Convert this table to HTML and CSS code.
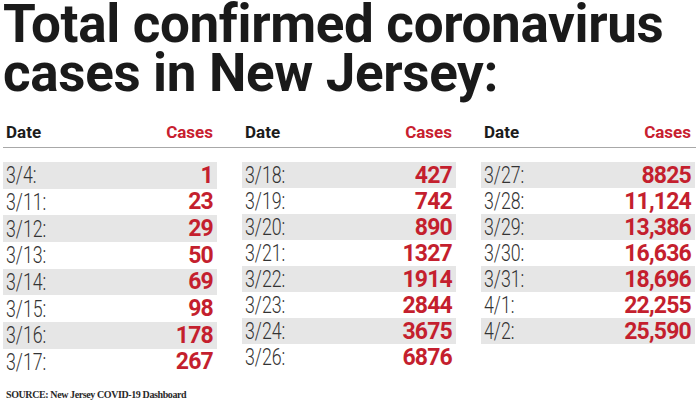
FILE: index.html
```html
<!DOCTYPE html>
<html lang="en">
  <head>
    <meta charset="UTF-8" />
    <meta name="viewport" content="width=device-width, initial-scale=1.0" />
    <title>NJ Coronavirus Cases</title>
    <link rel="stylesheet" href="styles.css">
  </head>
  <body>
    <div class="container">
      <h1>Total confirmed coronavirus<br />cases in New Jersey:</h1>

      <div class="table-head">
        <div class="head"><span>Date</span><span class="cases">Cases</span></div>
        <div class="head"><span>Date</span><span class="cases">Cases</span></div>
        <div class="head"><span>Date</span><span class="cases">Cases</span></div>
      </div>

      <div class="table-body">
        <div class="col col-first">
          <div class="row"><span class="date">3/4:</span><span class="num">1</span></div>
          <div class="row"><span class="date">3/11:</span><span class="num">23</span></div>
          <div class="row"><span class="date">3/12:</span><span class="num">29</span></div>
          <div class="row"><span class="date">3/13:</span><span class="num">50</span></div>
          <div class="row"><span class="date">3/14:</span><span class="num">69</span></div>
          <div class="row"><span class="date">3/15:</span><span class="num">98</span></div>
          <div class="row"><span class="date">3/16:</span><span class="num">178</span></div>
          <div class="row"><span class="date">3/17:</span><span class="num">267</span></div>
        </div>
        <div class="col">
          <div class="row"><span class="date">3/18:</span><span class="num">427</span></div>
          <div class="row"><span class="date">3/19:</span><span class="num">742</span></div>
          <div class="row"><span class="date">3/20:</span><span class="num">890</span></div>
          <div class="row"><span class="date">3/21:</span><span class="num">1327</span></div>
          <div class="row"><span class="date">3/22:</span><span class="num">1914</span></div>
          <div class="row"><span class="date">3/23:</span><span class="num">2844</span></div>
          <div class="row"><span class="date">3/24:</span><span class="num">3675</span></div>
          <div class="row"><span class="date">3/26:</span><span class="num">6876</span></div>
        </div>
        <div class="col">
          <div class="row"><span class="date">3/27:</span><span class="num">8825</span></div>
          <div class="row"><span class="date">3/28:</span><span class="num">11,124</span></div>
          <div class="row"><span class="date">3/29:</span><span class="num">13,386</span></div>
          <div class="row"><span class="date">3/30:</span><span class="num">16,636</span></div>
          <div class="row"><span class="date">3/31:</span><span class="num">18,696</span></div>
          <div class="row"><span class="date">4/1:</span><span class="num">22,255</span></div>
          <div class="row"><span class="date">4/2:</span><span class="num">25,590</span></div>
        </div>
      </div>

      <p class="source">SOURCE: New Jersey COVID-19 Dashboard</p>
    </div>
  </body>
</html>
```

FILE: styles.css
```css
body {
  margin: 0;
  padding: 0;
  background-color: white;
  color: #1c1c1c;
  font-family: Roboto, "Liberation Sans", sans-serif;
}

.container {
  padding-left: 3px;
  width: 693px;
}

h1 {
  margin: 0;
  font-size: 53px;
  font-weight: 700;
  line-height: 49px;
  letter-spacing: -0.35px;
  color: #1a1a1a;
}

.table-head {
  display: grid;
  grid-template-columns: repeat(3, 214px);
  column-gap: 25px;
  margin-top: 24px;
  padding-bottom: 5px;
  border-bottom: 1px solid #a8a8a8;
}

.head {
  display: flex;
  justify-content: space-between;
  padding: 0 4px 0 3px;
  font-size: 17px;
  font-weight: 700;
  line-height: 20px;
}

.head .cases {
  color: #c8202f;
}

.table-body {
  display: grid;
  grid-template-columns: repeat(3, 214px);
  column-gap: 25px;
  align-items: start;
  margin-top: 14px;
}

.row {
  display: flex;
  justify-content: space-between;
  align-items: center;
  height: 26px;
  padding: 0 4px 0 3px;
}

.col-first .row {
  height: 26.67px;
}

.row:nth-child(odd) {
  background-color: #e6e6e6;
}

.date {
  display: inline-block;
  font-size: 24px;
  font-weight: 300;
  color: #333333;
  transform: scaleX(0.74);
  transform-origin: left center;
}

.num {
  font-size: 23px;
  font-weight: 700;
  color: #c41f2e;
  letter-spacing: -0.8px;
}

.source {
  margin: 14px 0 0 3px;
  font-family: "Liberation Serif", serif;
  font-size: 10px;
  font-weight: 700;
  letter-spacing: -0.4px;
  color: #2a2a2a;
}
```
